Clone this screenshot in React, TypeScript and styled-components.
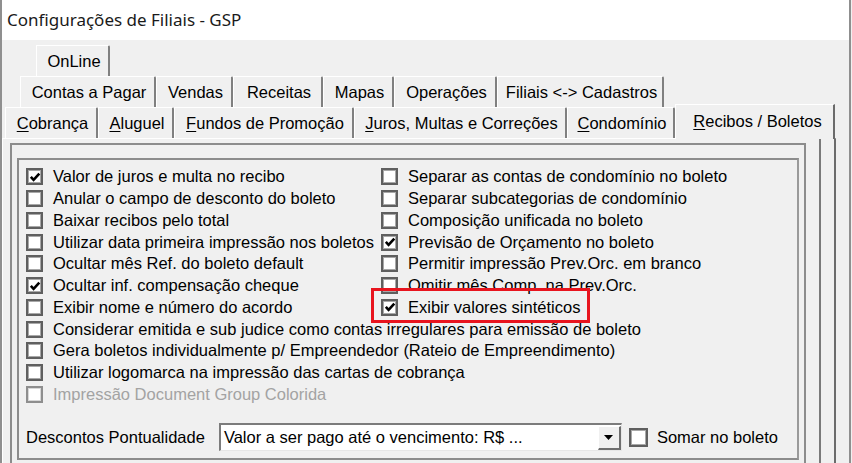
import React from "react";
import styled, { createGlobalStyle } from "styled-components";

interface TabDef {
  label: string;
  key?: number;
  width: number;
}

interface OptionDef {
  label: string;
  checked?: boolean;
  disabled?: boolean;
  wide?: boolean;
  highlight?: boolean;
}

const tabRows: { indent: number; tabs: TabDef[] }[] = [
  { indent: 34, tabs: [{ label: "OnLine", width: 74 }] },
  {
    indent: 18,
    tabs: [
      { label: "Contas a Pagar", width: 136 },
      { label: "Vendas", width: 77 },
      { label: "Receitas", width: 90 },
      { label: "Mapas", width: 71 },
      { label: "Operações", width: 103 },
      { label: "Filiais <-> Cadastros", width: 167 },
    ],
  },
];

const frontTabs: TabDef[] = [
  { label: "Cobrança", key: 0, width: 93 },
  { label: "Aluguel", key: 0, width: 76 },
  { label: "Fundos de Promoção", key: 0, width: 180 },
  { label: "Juros, Multas e Correções", key: 0, width: 213 },
  { label: "Condomínio", key: 0, width: 108 },
];

// left and right columns are interleaved row by row
const options: OptionDef[] = [
  { label: "Valor de juros e multa no recibo", checked: true },
  { label: "Separar as contas de condomínio no boleto" },
  { label: "Anular o campo de desconto do boleto" },
  { label: "Separar subcategorias de condomínio" },
  { label: "Baixar recibos pelo total" },
  { label: "Composição unificada no boleto" },
  { label: "Utilizar data primeira impressão nos boletos" },
  { label: "Previsão de Orçamento no boleto", checked: true },
  { label: "Ocultar mês Ref. do boleto default" },
  { label: "Permitir impressão Prev.Orc. em branco" },
  { label: "Ocultar inf. compensação cheque", checked: true },
  { label: "Omitir mês Comp. na Prev.Orc." },
  { label: "Exibir nome e número do acordo" },
  { label: "Exibir valores sintéticos", checked: true, highlight: true },
  { label: "Considerar emitida e sub judice como contas irregulares para emissão de boleto", wide: true },
  { label: "Gera boletos individualmente p/ Empreendedor (Rateio de Empreendimento)", wide: true },
  { label: "Utilizar logomarca na impressão das cartas de cobrança", wide: true },
  { label: "Impressão Document Group Colorida", wide: true, disabled: true },
];

const TabLabel: React.FC<{ tab: TabDef }> = ({ tab }) =>
  tab.key === undefined ? (
    <>{tab.label}</>
  ) : (
    <>
      <u>{tab.label.charAt(tab.key)}</u>
      {tab.label.slice(tab.key + 1)}
    </>
  );

const CheckBox: React.FC<{ checked?: boolean; disabled?: boolean }> = ({ checked, disabled }) => (
  <Box $disabled={disabled}>
    {checked && (
      <svg width="12" height="12" viewBox="0 0 12 12">
        <path d="M1.8 5.8 L4.6 8.9 L10.3 2.6" fill="none" stroke="#000" strokeWidth="2.6" />
      </svg>
    )}
  </Box>
);

export default function App() {
  return (
    <>
      <GlobalStyle />
      <Window>
        <TitleBar>Configurações de Filiais - GSP</TitleBar>
        <Body>
          {tabRows.map((row, i) => (
            <TabRow key={i} $indent={row.indent}>
              {row.tabs.map((tab) => (
                <Tab key={tab.label} $width={tab.width}>
                  <TabLabel tab={tab} />
                </Tab>
              ))}
            </TabRow>
          ))}
          <FrontRow>
            {frontTabs.map((tab) => (
              <Tab key={tab.label} $width={tab.width}>
                <TabLabel tab={tab} />
              </Tab>
            ))}
            <ActiveTab>
              <u>R</u>ecibos / Boletos
            </ActiveTab>
          </FrontRow>
          <TabPage>
            <Sheet>
              <OuterGroup>
                <InnerGroup>
                  <OptionGrid>
                    {options.map((opt) => (
                      <Option key={opt.label} $wide={opt.wide} $disabled={opt.disabled}>
                        <CheckBox checked={opt.checked} disabled={opt.disabled} />
                        {opt.label}
                        {opt.highlight && <Highlight />}
                      </Option>
                    ))}
                  </OptionGrid>
                  <FooterRow>
                    <span>Descontos Pontualidade</span>
                    <Combo>
                      <ComboText>Valor a ser pago até o vencimento: R$ ...</ComboText>
                      <DropButton>
                        <svg width="9" height="5" viewBox="0 0 9 5">
                          <path d="M0 0 H9 L4.5 5 Z" fill="#000" />
                        </svg>
                      </DropButton>
                    </Combo>
                    <Option>
                      <CheckBox />
                      Somar no boleto
                    </Option>
                  </FooterRow>
                </InnerGroup>
              </OuterGroup>
            </Sheet>
          </TabPage>
        </Body>
      </Window>
    </>
  );
}

const GlobalStyle = createGlobalStyle`
  html, body {
    margin: 0;
    padding: 0;
    background: #f0f0f0;
  }

  body {
    width: 852px;
    height: 463px;
    overflow: hidden;
    font-family: "Liberation Sans", Arial, sans-serif;
    font-size: 16.5px;
    color: #000;
  }
`;

const Window = styled.div`
  box-sizing: border-box;
  width: 851px;
  height: 463px;
  display: flex;
  flex-direction: column;
  overflow: hidden;
  border-left: 2px solid #8f8f8f;
  border-right: 2px solid #8f8f8f;
  background: #f0f0f0;
`;

const TitleBar = styled.div`
  height: 40px;
  flex-shrink: 0;
  display: flex;
  align-items: center;
  padding-left: 5px;
  padding-bottom: 2px;
  box-sizing: border-box;
  background: #ffffff;
  font-family: "Noto Sans", "Open Sans", sans-serif;
  font-size: 17px;
  color: #1a1a1a;
`;

const Body = styled.div`
  flex: 1;
  display: flex;
  flex-direction: column;
  padding-top: 5px;
  min-height: 0;
`;

const TabRow = styled.div<{ $indent: number }>`
  display: flex;
  height: 31px;
  flex-shrink: 0;
  padding-left: ${(p) => p.$indent}px;

  & + & {
    height: 30px;
  }
`;

const FrontRow = styled.div`
  display: flex;
  align-items: flex-end;
  height: 32px;
  flex-shrink: 0;
  padding-left: 3px;
  position: relative;
  z-index: 1;
`;

const Tab = styled.div<{ $width: number }>`
  box-sizing: border-box;
  width: ${(p) => p.$width}px;
  height: 31px;
  display: flex;
  align-items: center;
  justify-content: center;
  padding-left: 3px;
  border-top: 1px solid #ffffff;
  border-left: 1px solid #ffffff;
  border-right: 2px solid #808080;
  border-top-right-radius: 2px;
  white-space: nowrap;

  u {
    text-decoration-thickness: 1px;
    text-underline-offset: 2px;
  }
`;

const ActiveTab = styled.div`
  box-sizing: border-box;
  width: 160px;
  height: 35px;
  margin-bottom: -1px;
  display: flex;
  align-items: center;
  justify-content: center;
  padding: 0 0 1px 6px;
  background: #f0f0f0;
  border-top: 1px solid #ffffff;
  border-left: 1px solid #ffffff;
  border-right: 2px solid #6b6b6b;
  white-space: nowrap;

  u {
    text-decoration-thickness: 1px;
    text-underline-offset: 2px;
  }
`;

const TabPage = styled.div`
  box-sizing: border-box;
  width: 834px;
  flex: 1;
  display: flex;
  border-top: 1px solid #ffffff;
  border-left: 1px solid #ffffff;
  border-right: 2px solid #6b6b6b;
  min-height: 0;
`;

const Sheet = styled.div`
  box-sizing: border-box;
  width: 818px;
  padding: 4px 0 0 7px;
  border-right: 2px solid #7a7a7a;
`;

const OuterGroup = styled.div`
  box-sizing: border-box;
  width: 796px;
  height: 340px;
  padding: 13px 5px 0 5px;
  border: 2px solid #8c8c8c;
`;

const InnerGroup = styled.div`
  box-sizing: border-box;
  width: 782px;
  padding: 6px 7px 7px 7px;
  border: 2px solid #8c8c8c;
  border-right-color: #9a9a9a;
`;

const OptionGrid = styled.div`
  display: grid;
  grid-template-columns: 355px 1fr;
  grid-auto-rows: 21.75px;
`;

const Option = styled.div<{ $wide?: boolean; $disabled?: boolean }>`
  position: relative;
  display: flex;
  align-items: center;
  gap: 10px;
  white-space: nowrap;
  grid-column: ${(p) => (p.$wide ? "1 / -1" : "auto")};
  color: ${(p) => (p.$disabled ? "#a3a3a3" : "#000")};
`;

const Box = styled.span<{ $disabled?: boolean }>`
  box-sizing: border-box;
  width: 17px;
  height: 17px;
  flex-shrink: 0;
  display: flex;
  align-items: center;
  justify-content: center;
  background: #ffffff;
  border: 2px solid ${(p) => (p.$disabled ? "#8e8e8e" : "#5f5f5f")};
  box-shadow: inset 0 0 0 1px ${(p) => (p.$disabled ? "#d8d8d8" : "#a8a8a8")};
`;

const Highlight = styled.span`
  position: absolute;
  left: -10px;
  top: -9px;
  width: 219px;
  height: 35px;
  box-sizing: border-box;
  border: 3px solid #e8141e;
  pointer-events: none;
`;

const FooterRow = styled.div`
  display: flex;
  align-items: center;
  margin-top: 18px;
  gap: 14px;

  & > ${Option} {
    margin-left: -7px;
    gap: 9px;
  }

  & > ${Option} ${Box} {
    width: 19px;
    height: 19px;
  }
`;

const Combo = styled.div`
  box-sizing: border-box;
  width: 403px;
  height: 28px;
  display: flex;
  align-items: center;
  background: #ffffff;
  border-top: 2px solid #7c7c7c;
  border-left: 2px solid #7c7c7c;
  border-right: 1px solid #e6e6e6;
  border-bottom: 1px solid #e6e6e6;
`;

const ComboText = styled.span`
  flex: 1;
  padding-left: 3px;
  white-space: nowrap;
`;

const DropButton = styled.span`
  box-sizing: border-box;
  width: 23px;
  height: 24px;
  display: flex;
  align-items: center;
  justify-content: center;
  background: #f0f0f0;
  border-top: 1px solid #ffffff;
  border-left: 1px solid #ffffff;
  border-right: 2px solid #6e6e6e;
  border-bottom: 2px solid #6e6e6e;
`;
